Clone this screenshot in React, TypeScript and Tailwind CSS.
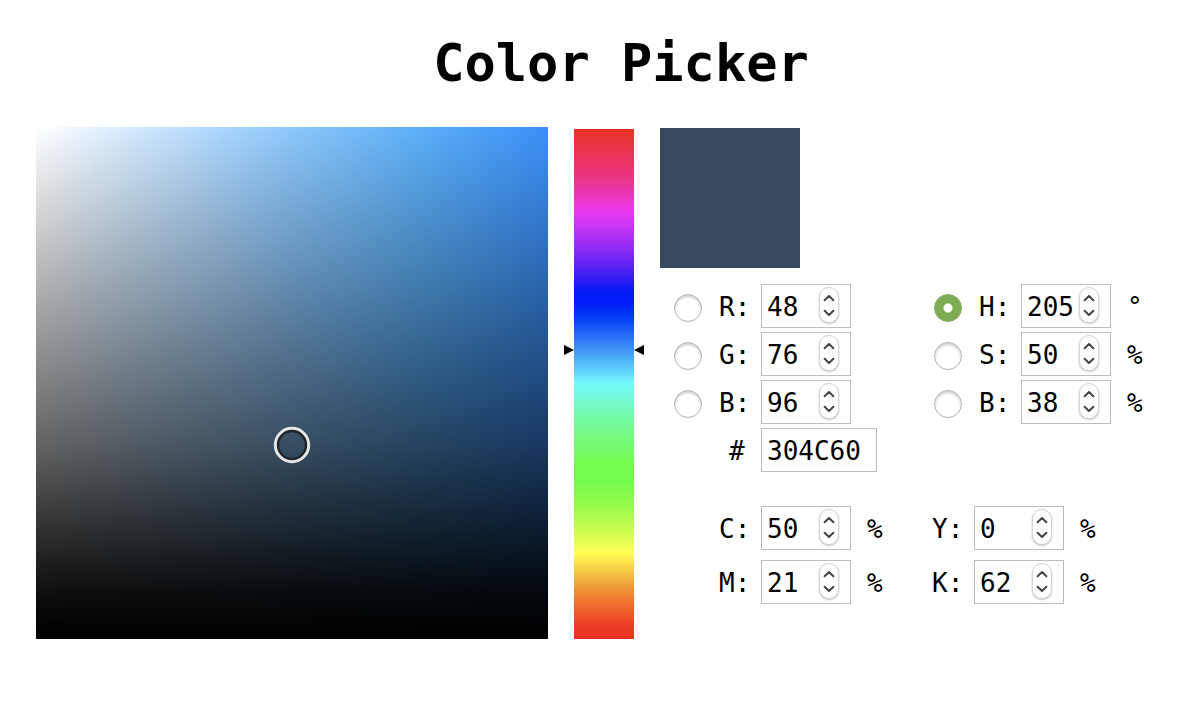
import { useRef } from "react";

type Channel = {
  id: string;
  label: string;
  name: string;
  value: number;
  max: number;
  unit?: string;
};

const rgb: Channel[] = [
  { id: "red", label: "R:", name: "Red", value: 48, max: 255 },
  { id: "green", label: "G:", name: "Green", value: 76, max: 255 },
  { id: "blue", label: "B:", name: "Blue", value: 96, max: 255 },
];

const hsb: Channel[] = [
  { id: "hue", label: "H:", name: "Hue", value: 205, max: 360, unit: "°" },
  { id: "saturation", label: "S:", name: "Saturation", value: 50, max: 100, unit: "%" },
  { id: "brightness", label: "B:", name: "Brightness", value: 38, max: 100, unit: "%" },
];

const cmyk: Channel[] = [
  { id: "cyan", label: "C:", name: "Cyan", value: 50, max: 100, unit: "%" },
  { id: "yellow", label: "Y:", name: "Yellow", value: 0, max: 100, unit: "%" },
  { id: "magenta", label: "M:", name: "Magenta", value: 21, max: 100, unit: "%" },
  { id: "key", label: "K:", name: "Key", value: 62, max: 100, unit: "%" },
];

function Chevron({ down = false }: { down?: boolean }) {
  return (
    <svg viewBox="0 0 12 8" className="h-2 w-3" fill="none" stroke="#444" strokeWidth="2" strokeLinecap="round" strokeLinejoin="round">
      <path d={down ? "M1.6 1.8 L6 6 L10.4 1.8" : "M1.6 6.2 L6 2 L10.4 6.2"} />
    </svg>
  );
}

function NumberField({ channel }: { channel: Channel }) {
  const input = useRef<HTMLInputElement>(null);
  return (
    <div className="flex h-11 w-[90px] shrink-0 items-center border border-[#bdbdbd] bg-white pr-[11px] pl-[5px]">
      <input
        ref={input}
        id={channel.id}
        type="number"
        min={0}
        max={channel.max}
        defaultValue={channel.value}
        className="h-full w-full min-w-0 flex-1 [appearance:textfield] bg-transparent pt-0.5 outline-none [&::-webkit-inner-spin-button]:appearance-none"
      />
      <div className="mb-0.5 flex h-9 w-5 shrink-0 flex-col overflow-hidden rounded-full border border-[#d6d6d6] bg-white shadow-[0_1px_2px_rgba(0,0,0,0.25)]">
        <button
          type="button"
          aria-label={`Increase ${channel.name}`}
          className="flex flex-1 items-center justify-center pt-0.5"
          onClick={() => input.current?.stepUp()}
        >
          <Chevron />
        </button>
        <button
          type="button"
          aria-label={`Decrease ${channel.name}`}
          className="flex flex-1 items-center justify-center pb-0.5"
          onClick={() => input.current?.stepDown()}
        >
          <Chevron down />
        </button>
      </div>
    </div>
  );
}

function ChannelRow({ channel, radio = false, checked = false }: { channel: Channel; radio?: boolean; checked?: boolean }) {
  return (
    <div className="flex items-center">
      {radio && (
        <input
          type="radio"
          name="axis"
          aria-label={channel.name}
          defaultChecked={checked}
          className="mt-1 mr-4 size-7 shrink-0 appearance-none rounded-full border border-[#b4b4b4] bg-white shadow-[inset_0_2px_3px_rgba(0,0,0,0.2)] checked:border-[#7fab55] checked:bg-[radial-gradient(circle,#fff_4px,#7fab55_5px)] checked:shadow-none"
        />
      )}
      <label htmlFor={channel.id} className="w-[43px] shrink-0 pt-0.5 pl-px">
        {channel.label}
      </label>
      <NumberField channel={channel} />
      {channel.unit && <span className="ml-4 pt-0.5">{channel.unit}</span>}
    </div>
  );
}

function ShadeField() {
  return (
    <div
      role="img"
      aria-label="Saturation and brightness"
      className="relative size-[512px] shrink-0 bg-[linear-gradient(to_bottom,rgba(0,0,0,0)_0%,rgba(0,0,0,0.61)_62%,rgba(0,0,0,0.73)_72%,rgba(0,0,0,0.87)_84%,rgba(0,0,0,0.945)_91%,#000_99%),linear-gradient(to_right,#fff_0%,#c4e3fe_25%,#8cc7fb_50%,#5cb0f8_75%,#3b90f8_100%)]"
    >
      <svg viewBox="0 0 38 38" className="absolute top-[299px] left-[237px] size-[38px]" fill="none">
        <circle cx="19" cy="19" r="14.3" stroke="#1f252b" strokeWidth="3" />
        <circle cx="19" cy="19" r="16.7" stroke="#e6e6e6" strokeWidth="3" />
      </svg>
    </div>
  );
}

function HueBar() {
  return (
    <div className="relative mt-0.5 h-[510px] w-[60px] shrink-0 bg-[linear-gradient(to_bottom,#e93323_0%,#ea3489_10%,#e93af5_16.5%,#7a28f5_25%,#3a1df4_29%,#001bf5_32%,#001bf5_34%,#0036f5_36.5%,#3d8ff7_43%,#74fbfd_50%,#75fb97_58%,#75fb4c_66%,#75fb4c_69%,#97fb4b_74%,#fffe54_83.2%,#f09737_90%,#eb3f25_97%,#eb3323_100%)]">
      <input
        type="range"
        aria-label="Hue slider"
        min={0}
        max={360}
        defaultValue={205}
        className="absolute inset-0 h-full w-full cursor-pointer opacity-0 [direction:rtl] [writing-mode:vertical-lr]"
      />
      <svg viewBox="0 0 80 10" className="pointer-events-none absolute top-[216px] -left-2.5 h-2.5 w-20" fill="#000">
        <path d="M0 0 L10 5 L0 10 Z" />
        <path d="M80 0 L70 5 L80 10 Z" />
      </svg>
    </div>
  );
}

export default function App() {
  return (
    <main className="min-h-screen bg-white px-9 pt-[33px] pb-16 font-['DejaVu_Sans_Mono',monospace] text-[26px] leading-8 text-black">
      <h1 className="pl-[46px] text-center text-[52px] leading-[60px] font-bold">Color Picker</h1>
      <div className="mt-[34px] flex items-start gap-[26px]">
        <ShadeField />
        <HueBar />
        <form className="mt-px min-w-0 flex-1">
          <div className="size-[140px] bg-[#364b60]" />
          <div className="mt-4 grid grid-cols-[260px_1fr] pl-3.5">
            <div className="flex flex-col gap-1">
              {rgb.map((c) => (
                <ChannelRow key={c.id} channel={c} radio />
              ))}
              <div className="flex items-center pl-[54px]">
                <label htmlFor="hex" className="w-[33px] shrink-0 pt-0.5 pl-px">
                  #
                </label>
                <input
                  id="hex"
                  type="text"
                  maxLength={6}
                  defaultValue="304C60"
                  className="h-11 w-[116px] border border-[#bdbdbd] bg-white pt-0.5 pl-[5px] outline-none"
                />
              </div>
            </div>
            <div className="flex flex-col gap-1">
              {hsb.map((c) => (
                <ChannelRow key={c.id} channel={c} radio checked={c.id === "hue"} />
              ))}
            </div>
          </div>
          <div className="mt-[34px] grid grid-cols-[213px_1fr] gap-y-2.5 pl-[58px]">
            {cmyk.map((c) => (
              <ChannelRow key={c.id} channel={c} />
            ))}
          </div>
        </form>
      </div>
    </main>
  );
}
